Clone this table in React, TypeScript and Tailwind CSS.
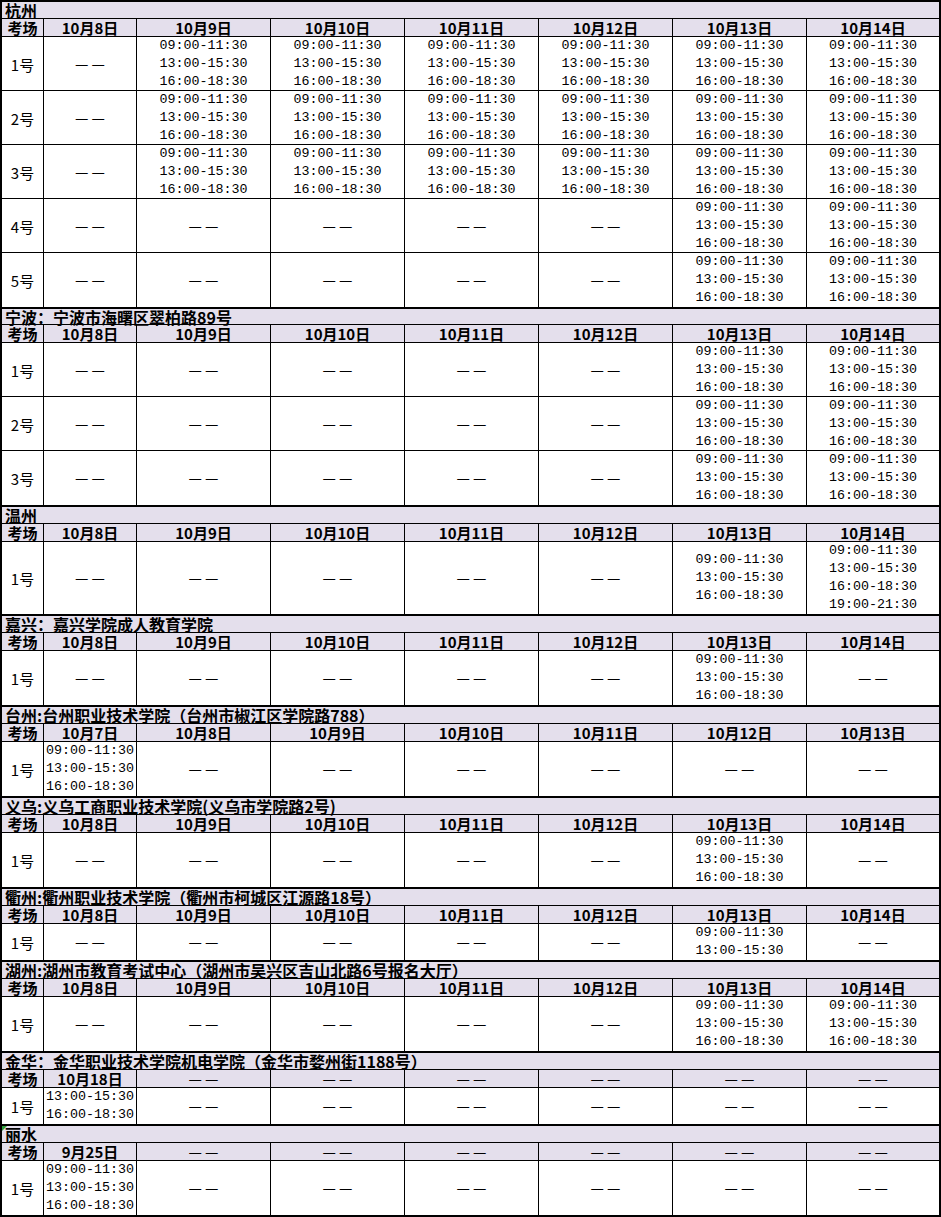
const T3 = ["09:00-11:30", "13:00-15:30", "16:00-18:30"];
const T4 = ["09:00-11:30", "13:00-15:30", "16:00-18:30", "19:00-21:30"];
const D: string[] | null = null;

const week = ["10月8日", "10月9日", "10月10日", "10月11日", "10月12日", "10月13日", "10月14日"];

type Row = { name: string; cells: (string[] | null)[] };
type Section = { title: string; heads: (string | null)[]; rows: Row[]; flag?: boolean; tight?: boolean };

const sections: Section[] = [
  {
    title: "杭州",
    heads: week,
    rows: [
      { name: "1号", cells: [D, T3, T3, T3, T3, T3, T3] },
      { name: "2号", cells: [D, T3, T3, T3, T3, T3, T3] },
      { name: "3号", cells: [D, T3, T3, T3, T3, T3, T3] },
      { name: "4号", cells: [D, D, D, D, D, T3, T3] },
      { name: "5号", cells: [D, D, D, D, D, T3, T3] },
    ],
  },
  {
    title: "宁波：宁波市海曙区翠柏路89号",
    heads: week,
    tight: true,
    rows: [
      { name: "1号", cells: [D, D, D, D, D, T3, T3] },
      { name: "2号", cells: [D, D, D, D, D, T3, T3] },
      { name: "3号", cells: [D, D, D, D, D, T3, T3] },
    ],
  },
  {
    title: "温州",
    heads: week,
    rows: [{ name: "1号", cells: [D, D, D, D, D, T3, T4] }],
  },
  {
    title: "嘉兴：嘉兴学院成人教育学院",
    heads: week,
    rows: [{ name: "1号", cells: [D, D, D, D, D, T3, D] }],
  },
  {
    title: "台州:台州职业技术学院（台州市椒江区学院路788）",
    heads: ["10月7日", "10月8日", "10月9日", "10月10日", "10月11日", "10月12日", "10月13日"],
    rows: [{ name: "1号", cells: [T3, D, D, D, D, D, D] }],
  },
  {
    title: "义乌:义乌工商职业技术学院(义乌市学院路2号)",
    heads: week,
    rows: [{ name: "1号", cells: [D, D, D, D, D, T3, D] }],
  },
  {
    title: "衢州:衢州职业技术学院（衢州市柯城区江源路18号）",
    heads: week,
    rows: [{ name: "1号", cells: [D, D, D, D, D, ["09:00-11:30", "13:00-15:30"], D] }],
  },
  {
    title: "湖州:湖州市教育考试中心（湖州市吴兴区吉山北路6号报名大厅）",
    heads: week,
    rows: [{ name: "1号", cells: [D, D, D, D, D, T3, T3] }],
  },
  {
    title: "金华：金华职业技术学院机电学院（金华市婺州街1188号）",
    heads: ["10月18日", null, null, null, null, null, null],
    rows: [{ name: "1号", cells: [["13:00-15:30", "16:00-18:30"], D, D, D, D, D, D] }],
  },
  {
    title: "丽水",
    heads: ["9月25日", null, null, null, null, null, null],
    rows: [{ name: "1号", cells: [T3, D, D, D, D, D, D] }],
    flag: true,
  },
];

const cols = "grid grid-cols-[42px_93px_134px_134px_134px_134px_134px_1fr]";
const cell = "flex items-center justify-center border-r border-black last:border-r-0";

// two separate bars, like the sheet's "——"
function Dash() {
  return (
    <span className="inline-flex gap-[3px] text-[15px] leading-[16px] font-normal">
      <span>—</span>
      <span>—</span>
    </span>
  );
}

function SectionBlock({ section }: { section: Section }) {
  return (
    <div className="border-t-2 border-black">
      <div
        className={`relative ${section.tight ? "h-[16px]" : "h-[17px]"} flex items-center border-b border-black bg-[#e4dfec] pl-[3px] text-[16px] font-bold leading-[16px] whitespace-nowrap`}
      >
        {section.flag && (
          <span className="absolute left-0 top-0 h-0 w-0 border-t-[5px] border-r-[5px] border-t-[#2e9e3a] border-r-transparent" />
        )}
        {section.title}
      </div>
      <div className={`${cols} h-[18px] border-b border-black bg-[#e4dfec] text-[15px] font-bold leading-[16px] whitespace-nowrap`}>
        <div className={cell}>考场</div>
        {section.heads.map((h, i) => (
          <div key={i} className={cell}>
            {h ?? <Dash />}
          </div>
        ))}
      </div>
      {section.rows.map((r, ri) => {
        const lines = Math.max(...r.cells.map((c) => (c ? c.length : 1)));
        return (
          <div key={ri} className={`${cols} border-b border-black last:border-b-0`} style={{ height: lines * 18 }}>
            <div className={`${cell} text-[15px] leading-[17px]`}>{r.name}</div>
            {r.cells.map((c, ci) => (
              <div key={ci} className={`${cell} flex-col`}>
                {c ? (
                  c.map((t, ti) => (
                    <div
                      key={ti}
                      className="font-['Liberation_Mono',monospace] text-[13.33px] leading-[18px] whitespace-nowrap"
                    >
                      {t}
                    </div>
                  ))
                ) : (
                  <Dash />
                )}
              </div>
            ))}
          </div>
        );
      })}
    </div>
  );
}

export default function App() {
  return (
    <div className="w-[941px] bg-white text-black font-['Noto_Sans_CJK_SC',sans-serif]">
      <div className="border-x-2 border-b-2 border-black">
        {sections.map((s, si) => (
          <SectionBlock key={si} section={s} />
        ))}
      </div>
    </div>
  );
}
